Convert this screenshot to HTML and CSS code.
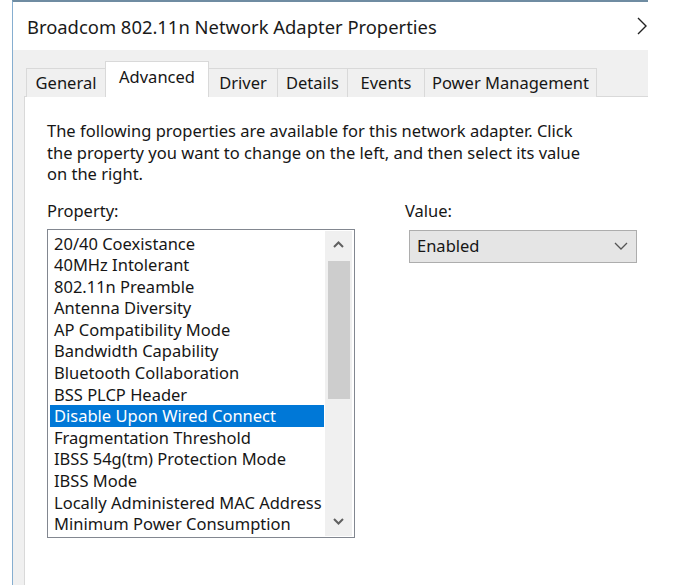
FILE: index.html
```html
<!DOCTYPE html>
<html>
<head>
<meta charset="utf-8">
<link rel="stylesheet" href="styles.css">
</head>
<body>
<div class="window">
  <div class="titlebar">
    <span class="title">Broadcom 802.11n Network Adapter Properties</span>
    <svg class="close" width="10" height="18" viewBox="0 0 10 18"><path d="M1 1 L9 9 L1 17" fill="none" stroke="#222" stroke-width="1.4"/></svg>
  </div>
  <div class="dialog">
    <div class="tabs">
      <div class="tab t-general">General</div>
      <div class="tab active t-advanced">Advanced</div>
      <div class="tab t-driver">Driver</div>
      <div class="tab t-details">Details</div>
      <div class="tab t-events">Events</div>
      <div class="tab last t-power">Power Management</div>
    </div>
    <div class="page">
      <p class="desc">The following properties are available for this network adapter. Click<br>the property you want to change on the left, and then select its value<br>on the right.</p>
      <div class="fields">
        <div class="col-prop">
          <div class="label">Property:</div>
          <div class="listbox">
            <ul class="items">
              <li>20/40 Coexistance</li>
              <li>40MHz Intolerant</li>
              <li>802.11n Preamble</li>
              <li>Antenna Diversity</li>
              <li>AP Compatibility Mode</li>
              <li>Bandwidth Capability</li>
              <li>Bluetooth Collaboration</li>
              <li>BSS PLCP Header</li>
              <li class="selected">Disable Upon Wired Connect</li>
              <li>Fragmentation Threshold</li>
              <li>IBSS 54g(tm) Protection Mode</li>
              <li>IBSS Mode</li>
              <li>Locally Administered MAC Address</li>
              <li>Minimum Power Consumption</li>
            </ul>
            <div class="scrollbar">
              <div class="arrow">
                <svg width="11" height="7" viewBox="0 0 11 7"><path d="M1 6 L5.5 1.5 L10 6" fill="none" stroke="#606060" stroke-width="2"/></svg>
              </div>
              <div class="track"><div class="thumb"></div></div>
              <div class="arrow">
                <svg width="11" height="7" viewBox="0 0 11 7"><path d="M1 1 L5.5 5.5 L10 1" fill="none" stroke="#606060" stroke-width="2"/></svg>
              </div>
            </div>
          </div>
        </div>
        <div class="col-value">
          <div class="label">Value:</div>
          <div class="select">
            <span>Enabled</span>
            <svg width="14" height="8" viewBox="0 0 14 8"><path d="M1 1 L7 7 L13 1" fill="none" stroke="#555" stroke-width="1.3"/></svg>
          </div>
        </div>
      </div>
    </div>
  </div>
</div>
</body>
</html>
```
FILE: styles.css
```css
html, body {
  margin: 0;
  padding: 0;
  background: #ffffff;
}
body {
  font-family: "Noto Sans", "Liberation Sans", sans-serif;
  font-size: 16.5px;
  color: #161616;
}
.window {
  margin-left: 12px;
  width: 636px;
  height: 585px;
  box-sizing: border-box;
  border-left: 1px solid #86aed0;
  border-top: 2px solid #6f8ca2;
  display: flex;
  flex-direction: column;
  overflow: hidden;
}
.titlebar {
  height: 48px;
  flex: none;
  display: flex;
  align-items: center;
  justify-content: space-between;
  padding-left: 14px;
  background: #fff;
}
.title {
  font-size: 18.4px;
  color: #1a1a1a;
}
.close {
  margin-right: 1px;
}
.dialog {
  flex: 1;
  background: #f0f0f0;
  display: flex;
  flex-direction: column;
  padding-top: 12px;
}
.tabs {
  display: flex;
  align-items: flex-end;
  height: 35px;
  margin-left: 13px;
  margin-bottom: -1px;
  position: relative;
  z-index: 1;
}
.tab {
  box-sizing: border-box;
  height: 29px;
  border-top: 1px solid #d9d9d9;
  border-left: 1px solid #d9d9d9;
  background: #f0f0f0;
  display: flex;
  align-items: center;
  justify-content: center;
  padding-bottom: 1px;
}
.tab.last {
  border-right: 1px solid #d9d9d9;
}
.tab.active {
  height: 36px;
  background: #ffffff;
  border-right: 1px solid #d9d9d9;
  padding-bottom: 6px;
}
.tab.active + .tab {
  border-left: none;
}
.t-general { width: 79px; }
.t-advanced { width: 104px; }
.t-driver { width: 68px; }
.t-details { width: 70px; }
.t-events { width: 77px; }
.t-power { width: 173px; }

.page {
  flex: 1;
  margin-left: 11px;
  background: #ffffff;
  border-left: 1px solid #d9d9d9;
  border-top: 1px solid #d9d9d9;
  padding: 23px 0 0 22px;
}
.desc {
  margin: 0;
  line-height: 21.5px;
}
.fields {
  display: flex;
  margin-top: 15px;
  gap: 50px;
}
.label {
  line-height: 21px;
  margin-bottom: 8px;
}
.col-value .label {
  margin-bottom: 9px;
}
.listbox {
  width: 308px;
  height: 309px;
  box-sizing: border-box;
  border: 1px solid #828790;
  display: flex;
  background: #fff;
}
.items {
  list-style: none;
  margin: 0;
  padding: 3px 0 0 2px;
  width: 274px;
  flex: none;
  overflow: hidden;
}
.items li {
  height: 21.6px;
  line-height: 21.6px;
  padding-left: 4px;
  white-space: nowrap;
}
.items li.selected {
  background: #0078d7;
  color: #ffffff;
}
.scrollbar {
  width: 27px;
  margin: 1px 0 1px 1px;
  background: #f0f0f0;
  display: flex;
  flex-direction: column;
}
.arrow {
  height: 28px;
  display: flex;
  align-items: center;
  justify-content: center;
}
.track {
  flex: 1;
  padding: 2px 2px 0 3px;
}
.thumb {
  height: 138px;
  background: #cdcdcd;
}
.select {
  margin-left: 4px;
  width: 228px;
  height: 33px;
  box-sizing: border-box;
  border: 1px solid #adadad;
  background: #e5e5e5;
  display: flex;
  align-items: center;
  justify-content: space-between;
  padding: 0 8px 1px 7px;
}
```
